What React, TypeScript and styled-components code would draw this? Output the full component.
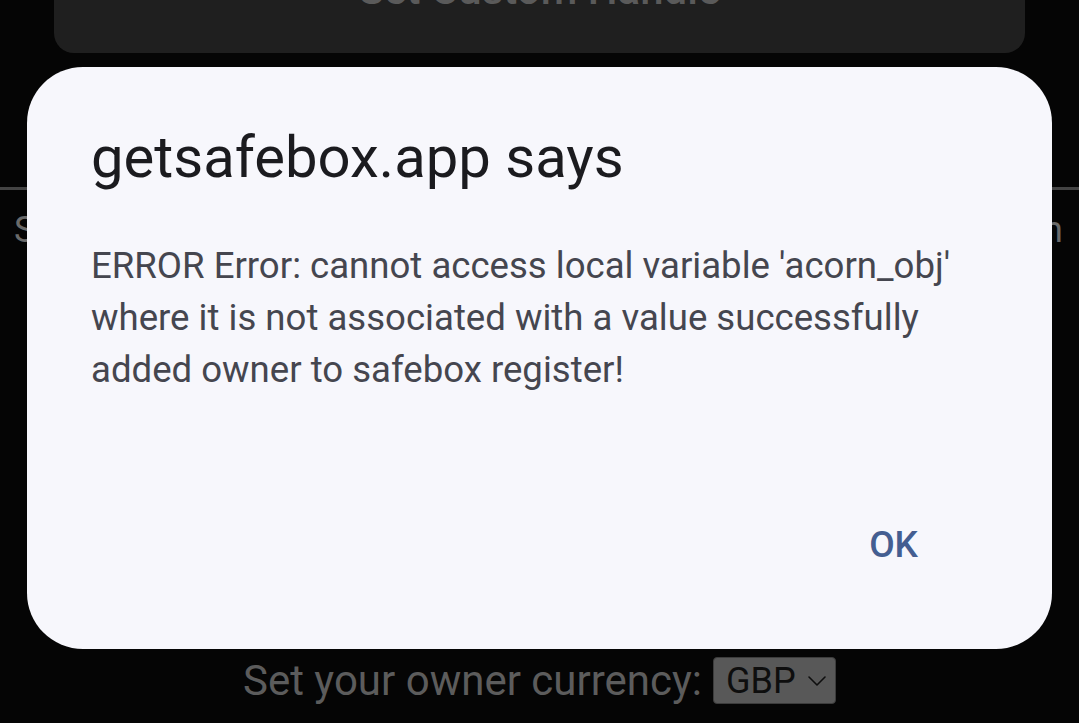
import React from "react";
import styled, { createGlobalStyle } from "styled-components";

const Global = createGlobalStyle`
  html, body { margin: 0; padding: 0; background: #050505; }
  body { font-family: Roboto, "Noto Sans", "Liberation Sans", sans-serif; overflow: hidden; }
  * { box-sizing: border-box; }
`;

const Page = styled.div`
  width: 1079px;
  height: 723px;
  background: #050505;
  display: flex;
  flex-direction: column;
  overflow: hidden;
  position: relative;
`;

const HandleButton = styled.div`
  margin: -70px 54px 0;
  height: 123px;
  background: #1f1f1f;
  border-radius: 20px;
  display: flex;
  align-items: center;
  justify-content: center;
  padding-bottom: 4px;
  color: #5a5a5a;
  font-size: 42px;
  font-weight: 500;
`;

const Divider = styled.div`
  margin-top: 134px;
  height: 3px;
  background: #444444;
`;

const InfoRow = styled.div`
  margin-top: 18px;
  padding: 0 16px 0 14px;
  display: flex;
  justify-content: space-between;
  color: #6a6a6a;
  font-size: 36px;
  line-height: 44px;
`;

const Spacer = styled.div`
  flex: 1;
`;

const CurrencyRow = styled.div`
  display: flex;
  align-items: center;
  justify-content: center;
  gap: 11px;
  margin-bottom: 18px;
  color: #5c5c5c;
  font-size: 42px;
`;

const CurrencySelect = styled.div`
  width: 123px;
  height: 47px;
  background: #585858;
  border: 1px solid #3c3c3c;
  border-radius: 4px;
  display: flex;
  align-items: center;
  padding: 0 0 0 12px;
  gap: 10px;
  color: #0e0e0e;
  font-size: 36px;
`;

const Backdrop = styled.div`
  position: absolute;
  inset: 0;
  display: flex;
  align-items: flex-start;
  justify-content: center;
  padding-top: 67px;
`;

const Dialog = styled.div`
  width: 1025px;
  height: 582px;
  background: #f7f7fc;
  border-radius: 56px;
  padding: 55px 64px 0;
  display: flex;
  flex-direction: column;
`;

const Title = styled.h2`
  margin: 0;
  font-weight: 400;
  font-size: 58px;
  line-height: 70px;
  color: #1b1b1f;
`;

const Message = styled.p`
  margin: 48px 0 0;
  font-size: 36.6px;
  line-height: 52px;
  color: #45464f;
  flex: 1;
`;

const Actions = styled.div`
  display: flex;
  justify-content: flex-end;
  padding: 0 70px 82px 0;
`;

const OkButton = styled.button`
  border: none;
  background: transparent;
  font-family: inherit;
  font-weight: 500;
  font-size: 37px;
  color: #445e91;
  padding: 0;
  line-height: 44px;
`;

export default function App() {
  return (
    <>
      <Global />
      <Page>
        <HandleButton>Set Custom Handle</HandleButton>
        <Divider />
        <InfoRow>
          <span>Set owner profile</span>
          <span>Owner login</span>
        </InfoRow>
        <Spacer />
        <CurrencyRow>
          <span>Set your owner currency:</span>
          <CurrencySelect>
            <span>GBP</span>
            <svg width="22" height="14" viewBox="0 0 22 14" fill="none">
              <path d="M3 3l8 8 8-8" stroke="#0e0e0e" strokeWidth="1.6" strokeLinecap="round" strokeLinejoin="round" />
            </svg>
          </CurrencySelect>
        </CurrencyRow>
        <Backdrop>
          <Dialog>
            <Title>getsafebox.app says</Title>
            <Message>
              ERROR Error: cannot access local variable 'acorn_obj' where it is not associated with a value successfully added owner to safebox register!
            </Message>
            <Actions>
              <OkButton>OK</OkButton>
            </Actions>
          </Dialog>
        </Backdrop>
      </Page>
    </>
  );
}
